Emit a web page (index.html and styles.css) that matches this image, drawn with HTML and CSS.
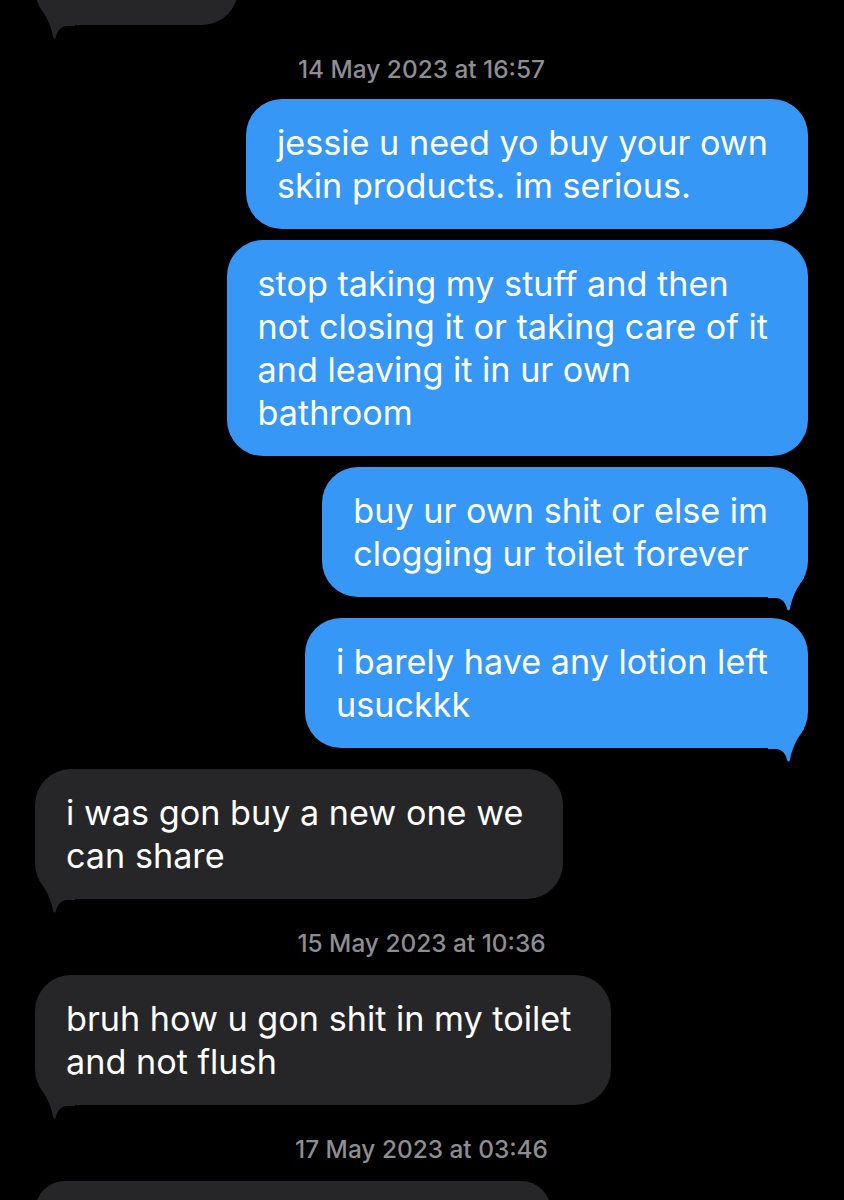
FILE: index.html
```html
<!DOCTYPE html>
<html lang="en">
<head>
    <meta charset="UTF-8">
    <meta name="viewport" content="width=device-width, initial-scale=1.0">
    <title>Messages</title>
    <link rel="stylesheet" href="styles.css">
</head>
<body>

    <div class="thread">
        <!-- bubble cut off at the top -->
        <div class="row in">
            <div class="bubble gray partial-top">
                <svg class="tail" viewBox="0 0 40 40"><path d="M0,25 L8,25 C14,25 18,30 19,36 Q20,39 22,36 C23,30 25,20 36,5 L36,0 L0,0 Z"/></svg>
            </div>
        </div>

        <div class="stamp first">14 May 2023 at 16:57</div>

        <div class="row out">
            <div class="bubble blue">jessie u need yo buy your own<br>skin products. im serious.</div>
        </div>
        <div class="row out gap-s">
            <div class="bubble blue">stop taking my stuff and then<br>not closing it or taking care of it<br>and leaving it in ur own<br>bathroom</div>
        </div>
        <div class="row out gap-s">
            <div class="bubble blue">buy ur own shit or else im<br>clogging ur toilet forever
                <svg class="tail" viewBox="0 0 40 40"><path d="M0,25 L8,25 C14,25 18,30 19,36 Q20,39 22,36 C23,30 25,20 36,5 L36,0 L0,0 Z"/></svg>
            </div>
        </div>
        <div class="row out gap-l">
            <div class="bubble blue">i barely have any lotion left<br>usuckkk
                <svg class="tail" viewBox="0 0 40 40"><path d="M0,25 L8,25 C14,25 18,30 19,36 Q20,39 22,36 C23,30 25,20 36,5 L36,0 L0,0 Z"/></svg>
            </div>
        </div>
        <div class="row in gap-l">
            <div class="bubble gray">i was gon buy a new one we<br>can share
                <svg class="tail" viewBox="0 0 40 40"><path d="M0,25 L8,25 C14,25 18,30 19,36 Q20,39 22,36 C23,30 25,20 36,5 L36,0 L0,0 Z"/></svg>
            </div>
        </div>

        <div class="stamp">15 May 2023 at 10:36</div>

        <div class="row in">
            <div class="bubble gray">bruh how u gon shit in my toilet<br>and not flush
                <svg class="tail" viewBox="0 0 40 40"><path d="M0,25 L8,25 C14,25 18,30 19,36 Q20,39 22,36 C23,30 25,20 36,5 L36,0 L0,0 Z"/></svg>
            </div>
        </div>

        <div class="stamp">17 May 2023 at 03:46</div>

        <!-- next bubble, only its top edge is on screen -->
        <div class="row in">
            <div class="bubble gray partial-bottom"></div>
        </div>
    </div>

</body>
</html>
```

FILE: styles.css
```css
body {
    margin: 0;
    background-color: #000;
    font-family: Inter, "Noto Sans", sans-serif;
    overflow: hidden;
    height: 1200px;
}
.thread {
    display: flex;
    flex-direction: column;
    padding: 0 36px 0 35px;
}
.row {
    display: flex;
}
.row.out {
    justify-content: flex-end;
}
.row.in {
    justify-content: flex-start;
}
.gap-s {
    margin-top: 11px;
}
.gap-l {
    margin-top: 21px;
}
.bubble {
    position: relative;
    padding: 22px 40px 22px 31px;
    border-radius: 36px;
    font-size: 34.2px;
    line-height: 43px;
    color: #fff;
    white-space: nowrap;
}
.blue {
    background-color: #3797f7;
}
.gray {
    background-color: #262628;
}
/* tail on the last bubble of a group */
.tail {
    position: absolute;
    bottom: -16px;
    width: 40px;
    height: 40px;
}
.blue .tail {
    right: 0;
    fill: #3797f7;
}
.gray .tail {
    left: 0;
    fill: #262628;
    transform: scaleX(-1);
}
.partial-top {
    width: 203px;
    height: 100px;
    padding: 0;
    margin-top: -75px;
}
.partial-bottom {
    width: 516px;
    height: 60px;
    padding: 0;
}
.stamp {
    text-align: center;
    color: #8d8d92;
    font-size: 24.4px;
    line-height: 24px;
    font-weight: 500;
    margin: 32px 0 20px;
}
.stamp.first {
    margin-bottom: 18px;
}
```
